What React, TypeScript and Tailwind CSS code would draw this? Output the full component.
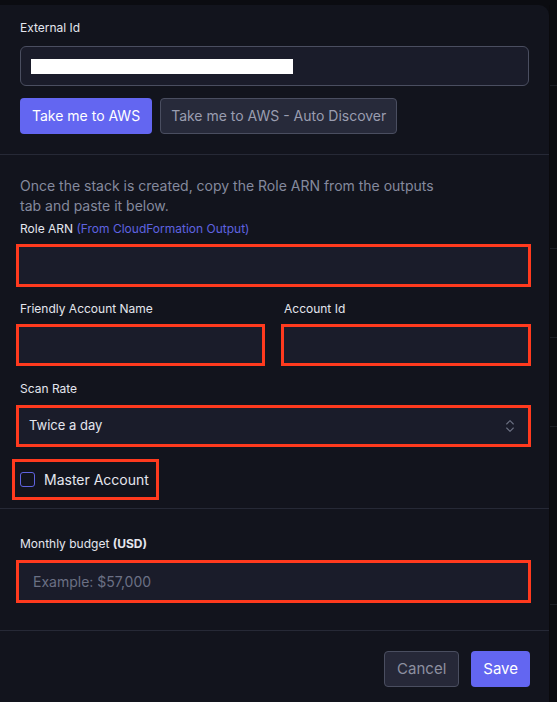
import { ChevronsUpDown } from "lucide-react";

export default function App() {
  return (
    <div className="flex h-[702px] w-full bg-[#0b0c11] pt-[5px] font-['Inter',sans-serif] overflow-hidden">
      <div className="w-[549px] shrink-0 rounded-tr-[10px] bg-[#12141d]">
        {/* external id */}
        <section className="border-b border-[#262936] px-5 pt-[15px] pb-5">
          <label className="block text-xs text-[#e4e6ee]">External Id</label>
          <div className="mt-2.5 flex h-10 items-center rounded-md border border-[#4a4e60] bg-[#1a1c2a] px-[10px]">
            <div className="h-[15px] w-[262px] bg-white" />
          </div>
          <div className="mt-3 flex gap-2">
            <button className="h-9 rounded bg-[#6366f1] px-3 text-sm text-white">Take me to AWS</button>
            <button className="h-9 rounded border border-[#4a4e60] bg-[#272a3a] px-2.5 text-sm text-[#9a9db0]">
              Take me to AWS - Auto Discover
            </button>
          </div>
        </section>

        {/* role + account */}
        <section className="border-b border-[#262936] px-5 pt-[21px] pb-2">
          <p className="max-w-[420px] text-sm leading-5 text-[#858a9e]">
            Once the stack is created, copy the Role ARN from the outputs tab and paste it below.
          </p>
          <label className="mt-[5px] block text-xs text-[#e4e6ee]">
            Role ARN <span className="text-[#5f63e0]">(From CloudFormation Output)</span>
          </label>
          <input className="mt-[7px] -ml-1 -mr-0.5 block h-[43px] w-[calc(100%+6px)] border-[3px] border-[#ff3a1e] bg-[#1a1c2a] px-3 text-sm text-white outline-none" />

          <div className="mt-[14px] grid grid-cols-2 gap-[19px]">
            <div>
              <label className="block text-xs text-[#e4e6ee]">Friendly Account Name</label>
              <input className="mt-[7px] -ml-1 block h-[42px] w-[calc(100%+4px)] border-[3px] border-[#ff3a1e] bg-[#1a1c2a] px-3 text-sm text-white outline-none" />
            </div>
            <div>
              <label className="block text-xs text-[#e4e6ee]">Account Id</label>
              <input className="mt-[7px] -ml-[3px] -mr-0.5 block h-[42px] w-[calc(100%+5px)] border-[3px] border-[#ff3a1e] bg-[#1a1c2a] px-3 text-sm text-white outline-none" />
            </div>
          </div>

          <label className="mt-[15px] block text-xs text-[#e4e6ee]">Scan Rate</label>
          <div className="mt-2 -ml-1 -mr-0.5 flex h-[42px] items-center justify-between border-[3px] border-[#ff3a1e] bg-[#1a1c2a] pl-[10px] pr-[10px]">
            <span className="text-[13px] text-[#e4e6ee]">Twice a day</span>
            <ChevronsUpDown className="h-4 w-4 text-[#6b7082]" strokeWidth={1.6} />
          </div>

          <div className="mt-3 -ml-2 inline-flex h-[41px] w-[147px] items-center gap-[9px] border-[3px] border-[#ff3a1e] pl-[5px]">
            <span className="h-[15px] w-[15px] rounded-[3px] border border-[#5f63e0]" />
            <span className="text-sm text-[#e4e6ee]">Master Account</span>
          </div>
        </section>

        {/* budget */}
        <section className="border-b border-[#262936] px-5 pt-[27px] pb-[27px]">
          <label className="block text-xs text-[#e4e6ee]">
            Monthly budget <span className="font-bold">(USD)</span>
          </label>
          <input
            placeholder="Example: $57,000"
            className="mt-2 -ml-1 -mr-0.5 block h-[43px] w-[calc(100%+6px)] border-[3px] border-[#ff3a1e] bg-[#1a1c2a] px-[14px] text-sm text-white outline-none placeholder:text-[#6b7084]"
          />
        </section>

        {/* footer */}
        <div className="flex justify-end gap-3 pl-5 pr-[19px] pt-5">
          <button className="h-9 rounded border border-[#4a4e60] bg-[#262838] px-3 text-[15px] text-[#8d90a0]">Cancel</button>
          <button className="h-9 rounded bg-[#6366f1] px-3 text-[15px] text-white">Save</button>
        </div>
      </div>
      <div className="flex flex-1 flex-col border-l border-[#0a0a0d]">
        <div className="h-[80px]" />
        <div className="h-[163px] border-t border-[#1c1e26]" />
        <div className="h-[89px] border-t border-[#1c1e26]" />
        <div className="h-[89px] border-t border-[#1c1e26]" />
        <div className="h-[178px] border-t border-[#1c1e26]" />
        <div className="h-[90px] border-t border-[#1c1e26]" />
      </div>
    </div>
  );
}
